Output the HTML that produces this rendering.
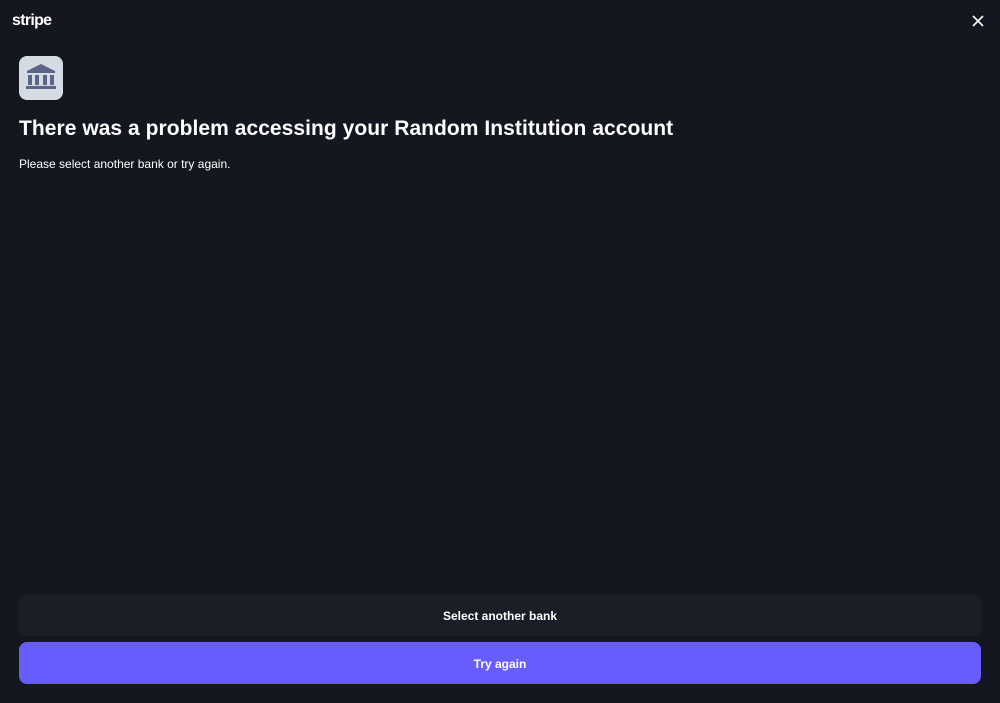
<!DOCTYPE html>
<html><head><style>
body{margin:0;width:1000px;height:703px;background:#14171f;font-family:"Liberation Sans",sans-serif;color:#fff;position:relative;overflow:hidden}
.logo{position:absolute;left:12px;top:12px;font-weight:bold;font-size:16px;letter-spacing:-0.7px}
.x{position:absolute;left:972px;top:15px}
.icon{position:absolute;left:19px;top:56px;width:44px;height:44px;background:#d5dbe3;border-radius:8px}
h1{position:absolute;left:19px;top:117px;margin:0;font-size:21px;font-weight:bold;letter-spacing:0.05px}
p{position:absolute;left:19px;top:157px;margin:0;font-size:12px}
.b{position:absolute;left:19px;width:962px;height:42px;border-radius:8px;text-align:center;line-height:44px;font-size:12px;font-weight:bold}
.b1{top:594px;background:#1b1e26}
.b2{top:642px;background:#675dff}
</style></head><body>
<div class="logo">stripe</div>
<svg class="x" width="12" height="12" viewBox="0 0 12 12"><path d="M1 1L11 11M11 1L1 11" stroke="#fff" stroke-width="1.6"/></svg>
<div class="icon"><svg width="44" height="44" viewBox="0 0 44 44" fill="#5a6587"><path d="M22 8L36 15V17H8V15Z"/><rect x="9" y="19" width="4" height="10"/><rect x="16" y="19" width="4" height="10"/><rect x="24" y="19" width="4" height="10"/><rect x="31" y="19" width="4" height="10"/><rect x="7" y="30" width="30" height="3"/></svg></div>
<h1>There was a problem accessing your Random Institution account</h1>
<p>Please select another bank or try again.</p>
<div class="b b1">Select another bank</div>
<div class="b b2">Try again</div>
</body></html>
